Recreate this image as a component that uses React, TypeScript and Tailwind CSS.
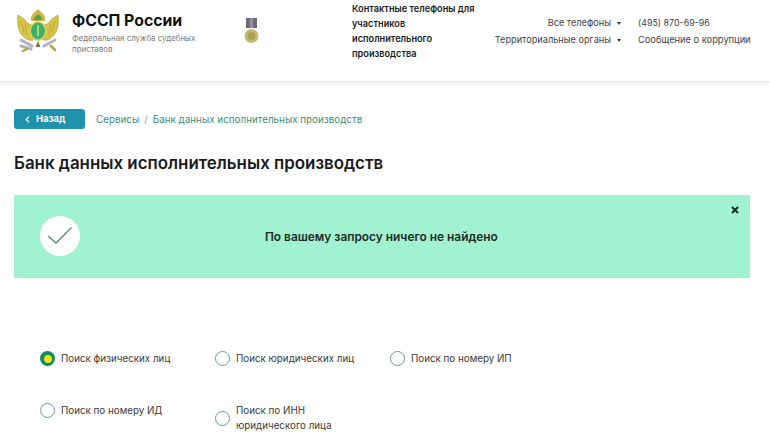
import type { JSX } from 'react';

const font = { fontFamily: 'Inter, "Noto Sans", sans-serif' };

function Emblem(): JSX.Element {
  return (
    <svg width="42" height="46" viewBox="0 0 42 46" className="shrink-0">
      {/* wings */}
      <path d="M17 17 C13 18 9 14 7 11 L1 7 C0 15 1 22 5 27 C8 31 12 33 16 32 Z" fill="#d9c445" stroke="#9d8f35" strokeWidth="0.6" />
      <path d="M25 17 C29 18 33 14 35 11 L41 7 C42 15 41 22 37 27 C34 31 30 33 26 32 Z" fill="#d9c445" stroke="#9d8f35" strokeWidth="0.6" />
      <path d="M4 13 L7 24 M8 16 L10 27 M38 13 L35 24 M34 16 L32 27" stroke="#b09f3a" strokeWidth="0.8" />
      {/* crown */}
      <path d="M14 13 C13 7 17 5 21 1 C25 5 29 7 28 13 Z" fill="#c9b847" />
      <path d="M17 12 C17 9 19 7 21 7 C23 7 25 9 25 12 Z" fill="#5f9a5a" />
      {/* scrolls */}
      <path d="M4 32 L15 38 M38 32 L27 38 M4 38 L14 41" stroke="#b4b2bd" strokeWidth="3" strokeLinecap="round" />
      <path d="M34 38 L38 42 M6 43 L10 41" stroke="#b5a53c" strokeWidth="2.5" strokeLinecap="round" />
      {/* shield */}
      <ellipse cx="21" cy="23" rx="8.5" ry="10" fill="#e4d552" />
      <ellipse cx="21" cy="23" rx="7" ry="8.5" fill="#3fb066" />
      <path d="M21 17 V28" stroke="#e4e08a" strokeWidth="1.4" />
      <path d="M21 33 L18.5 39 H23.5 Z" fill="#6f7a4a" />
    </svg>
  );
}

function Medal(): JSX.Element {
  return (
    <svg width="15" height="26" viewBox="0 0 15 26" className="shrink-0">
      <rect x="2" y="0" width="11" height="10" fill="#6d6a7c" />
      <rect x="6" y="0" width="3" height="10" fill="#94919e" />
      <circle cx="7.5" cy="18" r="7" fill="#c8b870" />
      <circle cx="7.5" cy="18" r="4" fill="#a8a45c" />
    </svg>
  );
}

function Caret(): JSX.Element {
  return <span className="ml-1.5 inline-block h-0 w-0 border-x-[2.5px] border-t-[3px] border-x-transparent border-t-[#333]" />;
}

function Radio({ label, checked }: { label: JSX.Element | string; checked?: boolean }): JSX.Element {
  return (
    <div className="flex items-center gap-[6px]">
      {checked ? (
        <span className="flex h-[15px] w-[15px] shrink-0 items-center justify-center rounded-full bg-[#0f8a5c]">
          <span className="h-[8px] w-[8px] rounded-full bg-[#f2e21c]" />
        </span>
      ) : (
        <span className="h-[15px] w-[15px] shrink-0 rounded-full border-[1.5px] border-[#5f9f94] bg-white" />
      )}
      <span className="text-[9.8px] leading-[15px] text-[#3a3a3a]">{label}</span>
    </div>
  );
}

export default function App(): JSX.Element {
  return (
    <div className="h-[440px] w-[770px] overflow-hidden bg-white" style={font}>
      {/* Header */}
      <header className="flex h-[82px] items-start border-b border-[#ececec] bg-white pl-[17px] pr-5 shadow-[0_2px_5px_rgba(0,0,0,0.08)]">
        <div className="mt-[8px] shrink-0">
          <Emblem />
        </div>
        <div className="ml-[13px] mt-[11px] w-[130px] shrink-0">
          <div className="text-[15.8px] font-bold leading-5 text-[#111]">ФССП России</div>
          <div className="mt-[2px] text-[7.9px] leading-[10.5px] text-[#7c7c7c]">Федеральная служба судебных приставов</div>
        </div>
        <div className="ml-[42px] mt-[18px] shrink-0">
          <Medal />
        </div>
        <div className="ml-[93px] mt-[1px] w-[126px] shrink-0 text-[9.2px] font-semibold leading-[15px] text-[#1c1c1c]">
          Контактные телефоны для участников исполнительного производства
        </div>
        <div className="mt-[16px] flex w-[143px] shrink-0 flex-col items-end gap-[3px] text-[9.2px] leading-[14px] text-[#444]">
          <div className="flex items-center">Все телефоны<Caret /></div>
          <div className="flex items-center whitespace-nowrap">Территориальные органы<Caret /></div>
        </div>
        <div className="ml-[17px] mt-[16px] flex shrink-0 flex-col gap-[3px] whitespace-nowrap text-[9.3px] leading-[14px] text-[#444]">
          <div className="text-[8.9px]">(495) 870-69-96</div>
          <div>Сообщение о коррупции</div>
        </div>
      </header>

      <main className="pl-[14px] pr-5">
        {/* Breadcrumbs */}
        <div className="mt-[27px] flex items-center">
          <button className="flex h-5 w-[71px] items-center gap-[6px] rounded-[3px] bg-[#1f93ad] pl-[11px] text-[9.5px] font-bold text-white">
            <svg width="5" height="7" viewBox="0 0 5 7">
              <path d="M4 0.7 L1.2 3.5 L4 6.3" fill="none" stroke="white" strokeWidth="1.2" />
            </svg>
            Назад
          </button>
          <nav className="ml-[11px] flex items-center text-[9.85px] text-[#3a8f7a]">
            <span>Сервисы</span>
            <span className="mx-[5px] text-[#999]">/</span>
            <span>Банк данных исполнительных производств</span>
          </nav>
        </div>

        <h1 className="mt-[22px] text-[16.9px] font-semibold leading-6 text-[#1a1a22]">Банк данных исполнительных производств</h1>

        {/* Alert */}
        <div className="relative mt-[20px] flex h-[83px] items-center bg-[#a0f2d0] pb-[2px]">
          <div className="ml-[26px] flex h-10 w-10 items-center justify-center rounded-full bg-white">
            <svg width="26" height="20" viewBox="0 0 26 20">
              <path d="M1 10 L9 17 L24.5 1.5" fill="none" stroke="#5b8a78" strokeWidth="1.3" />
            </svg>
          </div>
          <div className="ml-[185px] mt-[2px] text-[11.9px] font-semibold text-[#1e2a28]">По вашему запросу ничего не найдено</div>
          <svg width="8" height="8" viewBox="0 0 8 8" className="absolute right-[11px] top-[11px]">
            <path d="M1 1 L7 7 M7 1 L1 7" stroke="#1a2a26" strokeWidth="2" />
          </svg>
        </div>

        {/* Search type */}
        <div className="ml-[26px] mt-[73px] grid w-[525px] grid-cols-3">
          <div className="h-[52px]"><Radio label="Поиск физических лиц" checked /></div>
          <div><Radio label="Поиск юридических лиц" /></div>
          <div><Radio label="Поиск по номеру ИП" /></div>
          <div><Radio label="Поиск по номеру ИД" /></div>
          <div><Radio label={<>Поиск по ИНН<br />юридического лица</>} /></div>
        </div>
      </main>
    </div>
  );
}
